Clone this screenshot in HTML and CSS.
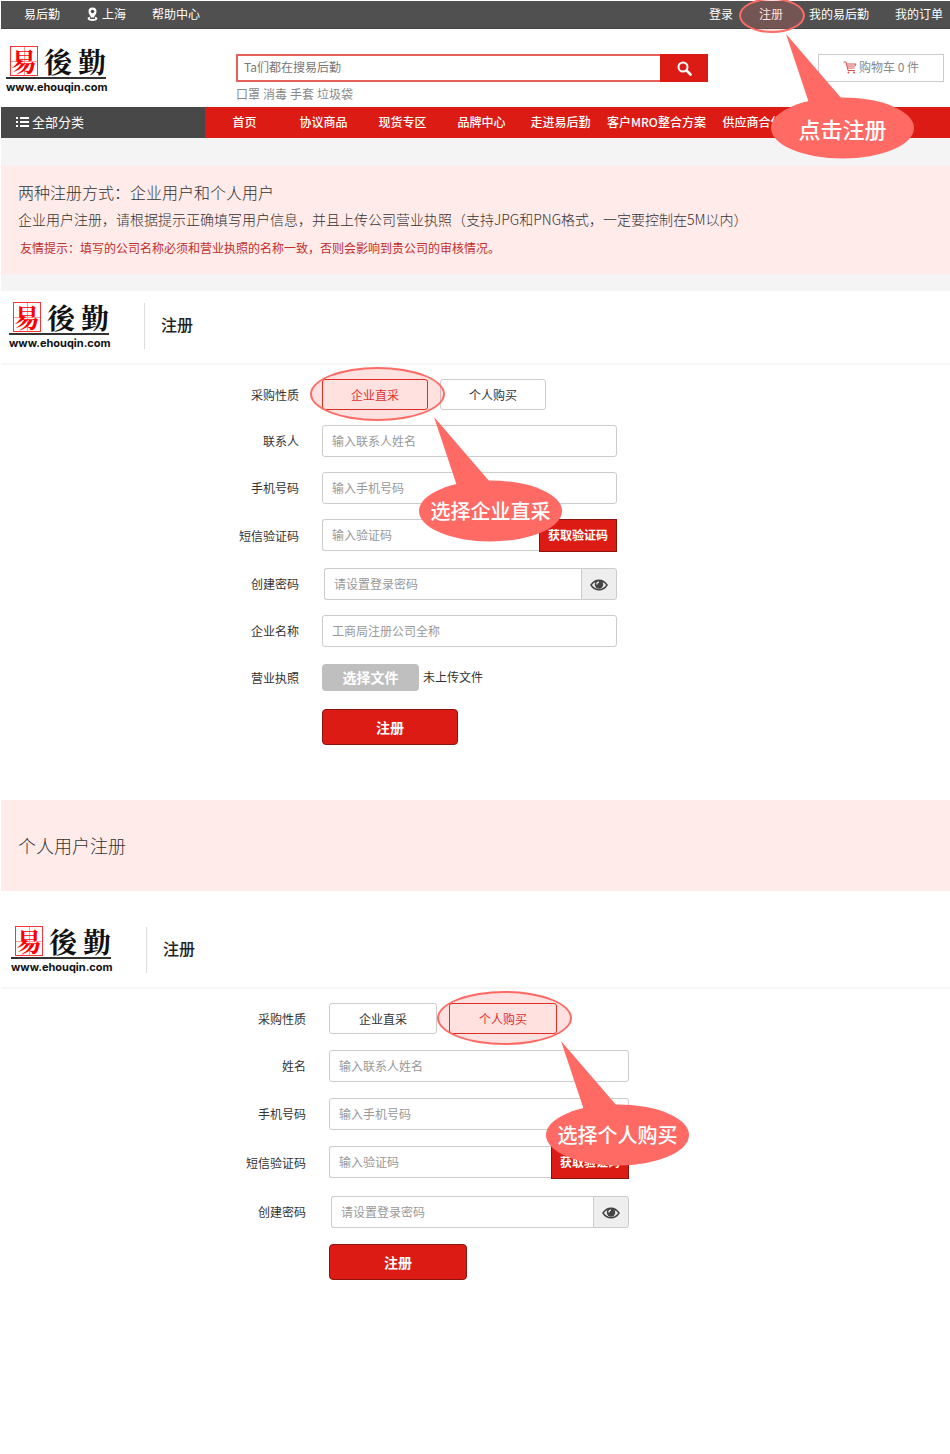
FILE: index.html
```html
<!DOCTYPE html>
<html lang="zh-CN">
<head>
    <meta charset="UTF-8">
    <meta name="viewport" content="width=device-width, initial-scale=1.0">
    <title>易后勤 - 注册帮助</title>
    <link rel="stylesheet" href="styles.css">
</head>
<body>
    <!-- Shared icons -->
    <svg class="sprite" aria-hidden="true">
        <symbol id="eye" viewBox="0 0 18 14">
            <path d="M1 7C5 0.600 13 0.600 17 7C13 13.400 5 13.400 1 7Z" fill="#eee" stroke="#444" stroke-width="1.500"/>
            <path d="M2 6C5 1 13 1 16 6L13.500 4.500H4.500Z" fill="#444"/>
            <circle cx="9" cy="6.500" r="4.200" fill="#444"/>
            <path d="M6.800 6.500A2.300 2.300 0 0 1 9 4.200" fill="none" stroke="#eee" stroke-width="1.200"/>
        </symbol>
        <symbol id="bubble" viewBox="0 0 143 125">
            <path d="M15 0L39 72H78L71 65Z" fill="#ff6a65"/>
            <ellipse cx="71.500" cy="94" rx="71.500" ry="30.500" fill="#ff6a65"/>
        </symbol>
    </svg>

    <div class="top">
        <nav class="topbar">
            <div class="topbar-left">
                <a href="#">易后勤</a>
                <a href="#" class="city">
                    <svg width="12" height="14" viewBox="0 0 12 14">
                        <path d="M6.500 0.500A4 4 0 0 1 10.500 4.500C10.500 7 8.500 8.500 8 10.500H5C4.500 8.500 2.500 7 2.500 4.500A4 4 0 0 1 6.500 0.500Z" fill="#fff"/>
                        <circle cx="6.500" cy="4.500" r="1.800" fill="#505050"/>
                        <path d="M4 10.500C1.500 11.200 2 13 6.500 13C11 13 11.500 11.200 9 10.500" fill="none" stroke="#fff" stroke-width="1.800"/>
                    </svg>
                    上海
                </a>
                <a href="#">帮助中心</a>
            </div>
            <div class="topbar-right">
                <a href="#">登录</a>
                <span class="marked marked-link">
                    <a href="#">注册</a>
                    <span class="ring"></span>
                    <span class="callout">
                        <svg><use href="#bubble"/></svg>
                        <strong>点击注册</strong>
                    </span>
                </span>
                <a href="#">我的易后勤</a>
                <a href="#">我的订单</a>
            </div>
        </nav>

        <header class="header">
            <a href="#" class="logo">
                <span class="logo-name"><span class="seal">易</span><span>後</span><span>勤</span></span>
                <span class="logo-url">www.ehouqin.com</span>
            </a>
            <div class="search">
                <form class="search-box">
                    <input type="text" placeholder="Ta们都在搜易后勤" aria-label="搜索">
                    <button type="button" aria-label="搜索">
                        <svg width="15" height="15" viewBox="0 0 15 15" fill="none" stroke="#fff">
                            <circle cx="6" cy="6" r="4.500" stroke-width="2"/>
                            <path d="M9.500 9.500L13.500 13.500" stroke-width="2.600" stroke-linecap="round"/>
                        </svg>
                    </button>
                </form>
                <div class="hot">
                    <a href="#">口罩</a>
                    <a href="#">消毒</a>
                    <a href="#">手套</a>
                    <a href="#">垃圾袋</a>
                </div>
            </div>
            <a href="#" class="cart">
                <svg width="14" height="13" viewBox="0 0 14 13" fill="none" stroke="#d9534f">
                    <path d="M0.500 1H3L5 9.500H12M3.500 3H13L12 5H4M4.500 7H11.500"/>
                    <circle cx="5.500" cy="11.500" r="1" fill="#d9534f" stroke="none"/>
                    <circle cx="11" cy="11.500" r="1" fill="#d9534f" stroke="none"/>
                </svg>
                购物车 0 件
            </a>
        </header>

        <nav class="menu">
            <a href="#" class="menu-all">
                <svg width="14" height="12" viewBox="0 0 14 12" fill="#fff">
                    <path d="M0 1H2V3H0ZM4 1H13V3H4ZM0 5H2V7H0ZM4 5H13V7H4ZM0 9H2V11H0ZM4 9H13V11H4Z"/>
                </svg>
                全部分类
            </a>
            <a href="#">首页</a>
            <a href="#">协议商品</a>
            <a href="#">现货专区</a>
            <a href="#">品牌中心</a>
            <a href="#">走进易后勤</a>
            <a href="#">客户MRO整合方案</a>
            <a href="#">供应商合作</a>
        </nav>
    </div>

    <section class="notice">
        <h2>两种注册方式：企业用户和个人用户</h2>
        <p>企业用户注册，请根据提示正确填写用户信息，并且上传公司营业执照（支持JPG和PNG格式，一定要控制在5M以内）</p>
        <p class="tip">友情提示：填写的公司名称必须和营业执照的名称一致，否则会影响到贵公司的审核情况。</p>
    </section>

    <!-- Company registration -->
    <section class="register company">
        <header class="register-head">
            <a href="#" class="logo">
                <span class="logo-name"><span class="seal">易</span><span>後</span><span>勤</span></span>
                <span class="logo-url">www.ehouqin.com</span>
            </a>
            <h1>注册</h1>
        </header>
        <form class="form">
            <span class="label">采购性质</span>
            <div class="choices">
                <span class="marked">
                    <button type="button" class="choice active">企业直采</button>
                    <span class="ring"></span>
                    <span class="callout">
                        <svg><use href="#bubble"/></svg>
                        <strong>选择企业直采</strong>
                    </span>
                </span>
                <button type="button" class="choice">个人购买</button>
            </div>

            <label for="c-name">联系人</label>
            <input type="text" id="c-name" class="field" placeholder="输入联系人姓名">

            <label for="c-phone">手机号码</label>
            <input type="tel" id="c-phone" class="field" placeholder="输入手机号码">

            <label for="c-code">短信验证码</label>
            <div class="group code">
                <input type="text" id="c-code" class="field" placeholder="输入验证码">
                <button type="button" class="get-code">获取验证码</button>
            </div>

            <label for="c-pass">创建密码</label>
            <div class="group password">
                <input type="password" id="c-pass" class="field" placeholder="请设置登录密码">
                <button type="button" class="show" aria-label="显示密码"><svg width="18" height="14"><use href="#eye"/></svg></button>
            </div>

            <label for="c-company">企业名称</label>
            <input type="text" id="c-company" class="field" placeholder="工商局注册公司全称">

            <span class="label">营业执照</span>
            <div class="upload">
                <button type="button">选择文件</button>
                <span>未上传文件</span>
            </div>

            <button type="button" class="submit">注册</button>
        </form>
    </section>

    <section class="notice notice-personal">
        <h2>个人用户注册</h2>
    </section>

    <!-- Personal registration -->
    <section class="register personal">
        <header class="register-head">
            <a href="#" class="logo">
                <span class="logo-name"><span class="seal">易</span><span>後</span><span>勤</span></span>
                <span class="logo-url">www.ehouqin.com</span>
            </a>
            <h1>注册</h1>
        </header>
        <form class="form">
            <span class="label">采购性质</span>
            <div class="choices">
                <button type="button" class="choice">企业直采</button>
                <span class="marked">
                    <button type="button" class="choice active">个人购买</button>
                    <span class="ring"></span>
                    <span class="callout">
                        <svg><use href="#bubble"/></svg>
                        <strong>选择个人购买</strong>
                    </span>
                </span>
            </div>

            <label for="p-name">姓名</label>
            <input type="text" id="p-name" class="field" placeholder="输入联系人姓名">

            <label for="p-phone">手机号码</label>
            <input type="tel" id="p-phone" class="field" placeholder="输入手机号码">

            <label for="p-code">短信验证码</label>
            <div class="group code">
                <input type="text" id="p-code" class="field" placeholder="输入验证码">
                <button type="button" class="get-code">获取验证码</button>
            </div>

            <label for="p-pass">创建密码</label>
            <div class="group password">
                <input type="password" id="p-pass" class="field" placeholder="请设置登录密码">
                <button type="button" class="show" aria-label="显示密码"><svg width="18" height="14"><use href="#eye"/></svg></button>
            </div>

            <button type="button" class="submit">注册</button>
        </form>
    </section>
</body>
</html>
```
FILE: styles.css
```css
* {
    box-sizing: border-box;
}
body {
    margin: 0;
    padding: 1px 0 0 1px;
    font-family: "Noto Sans CJK SC", sans-serif;
    font-size: 12px;
    line-height: 18px;
    color: #333;
    background-color: #fff;
}
a {
    color: inherit;
    text-decoration: none;
}
h1, h2, p {
    margin: 0;
}
button, input {
    font-family: inherit;
    font-size: 12px;
    padding: 0;
}
button {
    cursor: pointer;
}
.sprite {
    position: absolute;
    width: 0;
    height: 0;
}

/* Top bar */
.topbar {
    display: flex;
    justify-content: space-between;
    align-items: center;
    height: 28px;
    padding: 0 7px 2px 23px;
    background-color: #505050;
    border-bottom: 1px solid #444;
    color: #fff;
}
.topbar-left, .topbar-right {
    display: flex;
    gap: 26px;
}
.city {
    display: flex;
    align-items: center;
    gap: 4px;
}

/* Header */
.header {
    display: grid;
    grid-template-columns: 230px minmax(0, 472px) 1fr;
    align-items: start;
    height: 78px;
    padding: 16px 6px 0 5px;
}
.logo {
    display: block;
    width: 100px;
    color: #111;
}
.logo-name {
    display: flex;
    align-items: center;
    justify-content: space-between;
    height: 34px;
    padding-left: 4px;
    border-bottom: 2px solid #333;
    font-family: "Noto Serif CJK SC", "Noto Sans CJK SC", serif;
    font-size: 28px;
    line-height: 30px;
    font-weight: bold;
}
.seal {
    width: 28px;
    height: 30px;
    border: 1px solid #f33;
    background: linear-gradient(#f99, #f99) center / 100% 1px no-repeat, linear-gradient(#f99, #f99) center / 1px 100% no-repeat;
    color: #f00;
    text-align: center;
    font-size: 26px;
    line-height: 27px;
}
.logo-url {
    display: block;
    font-family: Inter, sans-serif;
    font-size: 11px;
    line-height: 16px;
    font-weight: bold;
    text-align: center;
}
.search {
    padding-top: 9px;
}
.search-box {
    display: flex;
    height: 28px;
}
.search-box input {
    flex: 1;
    min-width: 0;
    padding: 0 6px 3px;
    border: 2px solid #e5625c;
    border-right: 0;
    outline: none;
}
.search-box input::placeholder {
    color: #777;
}
.search-box button {
    width: 48px;
    padding-bottom: 3px;
    border: 0;
    background-color: #dc1c14;
}
.search-box svg {
    vertical-align: middle;
}
.hot {
    display: flex;
    gap: 3px;
    padding-top: 3px;
    color: #888;
}
.cart {
    display: flex;
    align-items: center;
    justify-content: center;
    gap: 2px;
    justify-self: end;
    width: 126px;
    height: 28px;
    margin-top: 9px;
    padding-bottom: 2px;
    border: 1px solid #ccc;
    color: #888;
}

/* Main menu */
.menu {
    display: flex;
    height: 31px;
    line-height: 29px;
    background-color: #dc1c14;
    color: #fff;
}
.menu a {
    min-width: 79px;
    padding: 0 7px;
    text-align: center;
    font-weight: 500;
    white-space: nowrap;
}
.menu .menu-all {
    display: flex;
    align-items: center;
    gap: 2px;
    width: 204px;
    padding: 0 0 2px 15px;
    background-color: #484848;
    font-size: 13px;
    font-weight: normal;
}

/* Notices */
.notice {
    padding: 13px 17px;
    background-color: #ffebea;
    background-clip: padding-box;
    border-top: 28px solid #f4f4f4;
    border-bottom: 17px solid #f4f4f4;
    color: #333;
    font-weight: 300;
}
.notice h2 {
    font-size: 16px;
    line-height: 26px;
    font-weight: 300;
}
.notice p {
    font-size: 14px;
    line-height: 29px;
}
.notice .tip {
    padding: 0 2px;
    font-size: 12px;
    line-height: 27px;
    font-weight: normal;
    color: #c22f2b;
}
.notice-personal {
    padding: 32px 17px;
    border: 0;
}
.notice-personal h2 {
    font-size: 18px;
    line-height: 27px;
}

/* Registration forms */
.company {
    --field-width: 295px;
    --choice-width: 106px;
    --submit-width: 136px;
    --label-width: 298px;
    --row-gap: 15px;
    padding-bottom: 55px;
}
.personal {
    --field-width: 300px;
    --choice-width: 108px;
    --submit-width: 138px;
    --label-width: 305px;
    --row-gap: 16px;
    padding-top: 24px;
}
.register-head {
    display: flex;
    align-items: center;
    gap: 35px;
    height: 74px;
    padding: 0 8px 2px;
    border-bottom: 2px solid #f6f6f6;
}
.personal .register-head {
    padding: 0 10px 2px;
}
.register-head h1 {
    height: 46px;
    padding-left: 16px;
    border-left: 1px solid #ddd;
    font-size: 16px;
    line-height: 42px;
    font-weight: 500;
    color: #222;
}
.form {
    display: grid;
    grid-template-columns: var(--label-width) minmax(0, var(--field-width));
    column-gap: 23px;
    row-gap: var(--row-gap);
    align-items: center;
    padding-top: 14px;
}
.label, .form label {
    text-align: right;
}
.choices {
    display: flex;
    gap: 12px;
}
.choice {
    display: block;
    width: var(--choice-width);
    height: 31px;
    border: 1px solid #ccc;
    border-radius: 3px;
    background-color: #fff;
    color: #333;
}
.choice.active {
    border-color: #dc1c14;
    color: #dc1c14;
}
.field {
    width: 100%;
    height: 32px;
    padding: 0 9px 2px;
    border: 1px solid #ccc;
    border-radius: 3px;
    background-color: #fff;
    outline: none;
}
.field::placeholder {
    color: #999;
}
.group {
    display: flex;
}
.group .field {
    flex: 1;
    min-width: 0;
    border-right: 0;
    border-radius: 3px 0 0 3px;
}
.code {
    height: 34px;
}
.get-code {
    width: 78px;
    height: 33px;
    padding-bottom: 2px;
    border: 1px solid #8c1410;
    background-color: #dc1c14;
    color: #fff;
    font-weight: bold;
}
.password {
    padding-left: 2px;
}
.show {
    width: 36px;
    height: 32px;
    padding-bottom: 2px;
    border: 1px solid #ccc;
    border-radius: 0 3px 3px 0;
    background-color: #eee;
}
.show svg {
    vertical-align: middle;
}
.upload {
    display: flex;
    align-items: center;
    gap: 4px;
    height: 32px;
    padding-bottom: 2px;
}
.upload button {
    width: 97px;
    height: 27px;
    border: 0;
    border-radius: 4px;
    background-color: #bfbfbf;
    color: #fff;
    font-size: 14px;
    font-weight: bold;
}
.submit {
    grid-column: 2;
    width: var(--submit-width);
    height: 36px;
    border: 1px solid #8c1410;
    border-radius: 4px;
    background-color: #dc1c14;
    color: #fff;
    font-size: 14px;
    font-weight: bold;
}

/* Step callouts */
.marked {
    position: relative;
}
.ring {
    position: absolute;
    top: -12px;
    left: -12px;
    width: 135px;
    height: 54px;
    border: 2px solid #ff6a65;
    border-radius: 50%;
    background-color: rgba(255, 106, 101, 0.2);
    pointer-events: none;
}
.callout {
    position: absolute;
    z-index: 1;
    top: 38px;
    left: 97px;
    width: 143px;
    height: 125px;
    padding-top: 64px;
    text-align: center;
    pointer-events: none;
}
.callout svg {
    position: absolute;
    top: 0;
    left: 0;
    width: 143px;
    height: 125px;
}
.callout strong {
    position: relative;
    font-size: 20px;
    line-height: 60px;
    font-weight: 500;
    color: #fff;
    white-space: nowrap;
}
.marked-link .ring {
    top: -7px;
    left: -20px;
    width: 66px;
    height: 35px;
}
.marked-link .callout {
    top: 29px;
    left: 12px;
}
.marked-link strong {
    font-size: 22px;
}
```
